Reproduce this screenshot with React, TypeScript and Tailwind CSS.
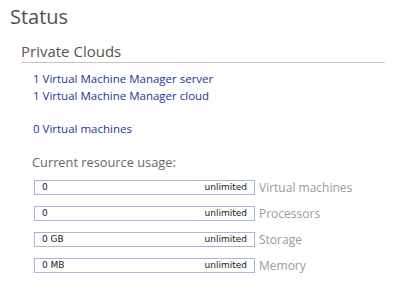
import React from "react";

const rows = [
  { value: "0", label: "Virtual machines" },
  { value: "0", label: "Processors" },
  { value: "0 GB", label: "Storage" },
  { value: "0 MB", label: "Memory" },
];

export default function App() {
  return (
    <div
      className="w-[400px] h-[292px] bg-white overflow-hidden"
      style={{ fontFamily: '"Open Sans", "Noto Sans", sans-serif' }}
    >
      <div className="pt-[3px] pl-[10px] text-[20px] leading-[28px] text-[#4f4f4f]">Status</div>
      <div className="mt-[10px] ml-[21px] w-[364px] pb-[1px] border-b border-[#c6c6c6] text-[15px] leading-[20px] text-[#555555]">
        Private Clouds
      </div>
      <div className="mt-[7px] ml-[33px] text-[11.5px] leading-[17px] text-[#24339b]">
        <div>1 Virtual Machine Manager server</div>
        <div>1 Virtual Machine Manager cloud</div>
        <div className="mt-[16px]">0 Virtual machines</div>
      </div>
      <div className="mt-[17px] ml-[32px] text-[12.8px] leading-[17px] text-[#666666]">Current resource usage:</div>
      <div className="mt-[9px] ml-[34px] flex flex-col gap-[11px]">
        {rows.map((r) => (
          <div key={r.label} className="flex items-center">
            <div
              className="w-[221px] h-[15px] border border-[#aab6d9] flex items-center justify-between pl-[7px] pr-[7px] text-[9px] text-[#1a1a1a]"
              style={{ fontFamily: '"DejaVu Sans", sans-serif' }}
            >
              <span>{r.value}</span>
              <span>unlimited</span>
            </div>
            <div className="ml-[4px] text-[12px] leading-[15px] text-[#9a9a9a]">{r.label}</div>
          </div>
        ))}
      </div>
    </div>
  );
}
